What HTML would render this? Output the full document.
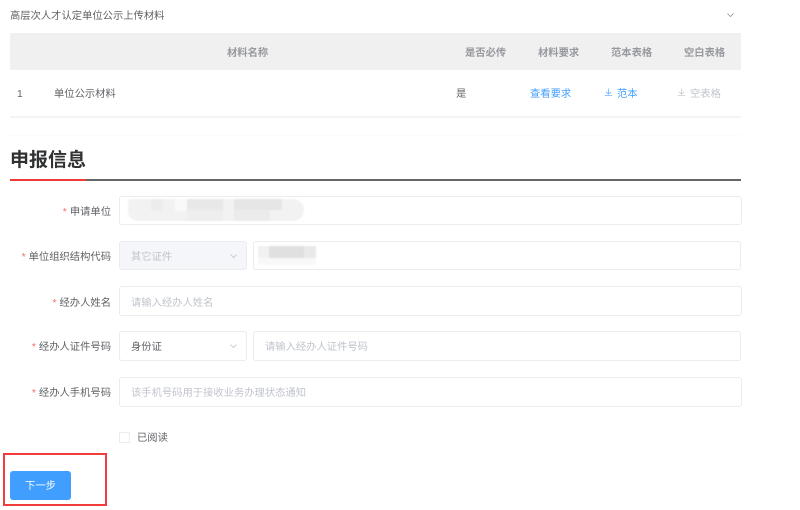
<!DOCTYPE html>
<html lang="zh"><head><meta charset="utf-8"><style>
html,body{margin:0;padding:0;background:#fff}
body{width:800px;height:510px;position:relative;overflow:hidden;font-family:"Liberation Sans","Noto Sans CJK SC",sans-serif;font-size:10.3px;color:#606266}
.t{position:absolute;white-space:nowrap;line-height:14px;height:14px;filter:blur(.25px)}
.b{position:absolute;box-sizing:border-box;border:1px solid #ebebf1;border-radius:3px;background:#fff}
.h{font-weight:700;color:#97999e}
.l{text-align:right;right:689px}
.l i{color:#f56c6c;font-style:normal;margin-right:3px}
.p{color:#c0c4cc}
svg{position:absolute;overflow:visible}
.m{position:absolute}
.q{filter:blur(.7px)}
</style></head><body>
<div class="t" style="left:10px;top:10px;color:#606266">高层次人才认定单位公示上传材料</div>
<svg style="left:727px;top:13px" width="7" height="5"><path d="M.5 .5L3.5 3.5L6.5 .5" fill="none" stroke="#8f9399" stroke-width=".8"/></svg>

<div class="m" style="left:10px;top:33px;width:731px;height:37px;background:#f0f0f1"></div>
<div class="t h" style="left:227px;top:47px">材料名称</div>
<div class="t h" style="left:465px;top:47px">是否必传</div>
<div class="t h" style="left:538px;top:47px">材料要求</div>
<div class="t h" style="left:611px;top:47px">范本表格</div>
<div class="t h" style="left:684px;top:47px">空白表格</div>
<div class="t" style="left:17px;top:88px">1</div>
<div class="t" style="left:54px;top:88px">单位公示材料</div>
<div class="t" style="left:456px;top:88px">是</div>
<div class="t" style="left:530px;top:88px;color:#409eff">查看要求</div>
<svg style="left:604px;top:88px" width="9" height="9"><path d="M4.5 .5V6M2 3.8L4.5 6.2L7 3.8M.8 7.6H8.2" fill="none" stroke="#6fb4fb" stroke-width=".8"/></svg>
<div class="t" style="left:617px;top:88px;color:#409eff">范本</div>
<svg style="left:677px;top:88px" width="9" height="9"><path d="M4.5 .5V6M2 3.8L4.5 6.2L7 3.8M.8 7.6H8.2" fill="none" stroke="#c8cbd2" stroke-width=".8"/></svg>
<div class="t" style="left:690px;top:88px;color:#c0c4cc">空表格</div>
<div class="m" style="left:10px;top:116px;width:731px;height:2px;background:#f3f3f8"></div>
<div class="m" style="left:10px;top:135px;width:731px;height:1px;background:#fbfbfb"></div>

<div class="t" style="left:10px;top:150px;height:22px;line-height:22px;font-size:19px;font-weight:700;color:#303133;filter:none">申报信息</div>
<div class="m" style="left:10px;top:179px;width:731px;height:2px;background:#666"></div>
<div class="m" style="left:10px;top:179px;width:76px;height:2px;background:#f03a3a"></div>

<div class="t l" style="top:206px"><i>*</i>申请单位</div>
<div class="b" style="left:119px;top:196px;width:623px;height:29px"></div>
<div class="q" style="position:absolute;left:0;top:0">
<div class="m" style="left:128px;top:199px;width:176px;height:22px;background:#f2f2f2;border-radius:3px 11px 11px 10px"></div>
<div class="m" style="left:151px;top:199px;width:12px;height:12px;background:#ececec"></div>
<div class="m" style="left:175px;top:199px;width:12px;height:12px;background:#f9f9f9"></div>
<div class="m" style="left:187px;top:199px;width:36px;height:11px;background:#e8e8e8"></div>
<div class="m" style="left:187px;top:210px;width:36px;height:11px;background:#eeeeee"></div>
<div class="m" style="left:234px;top:199px;width:48px;height:11px;background:#e6e6e6"></div>
<div class="m" style="left:234px;top:210px;width:36px;height:11px;background:#ebebeb"></div>
</div>

<div class="t l" style="top:251px"><i>*</i>单位组织结构代码</div>
<div class="b" style="left:119px;top:241px;width:128px;height:29px;background:#f5f6fa"></div>
<div class="t" style="left:131px;top:251px;color:#c0c4cc">其它证件</div>
<svg style="left:230px;top:254px" width="7" height="5"><path d="M.5 .5L3.5 3.5L6.5 .5" fill="none" stroke="#c0c4cc" stroke-width=".8"/></svg>
<div class="b" style="left:253px;top:241px;width:488px;height:29px"></div>
<div class="q" style="position:absolute;left:0;top:0">
<div class="m" style="left:258px;top:246px;width:58px;height:19px;background:linear-gradient(#f1f1f1 60%,#f8f8f8 60%)"></div>
<div class="m" style="left:269px;top:246px;width:35px;height:12px;background:#e0e0e0"></div>
<div class="m" style="left:304px;top:246px;width:12px;height:12px;background:#e9e9e9"></div>
</div>

<div class="t l" style="top:297px"><i>*</i>经办人姓名</div>
<div class="b" style="left:119px;top:286px;width:623px;height:30px"></div>
<div class="t p" style="left:131px;top:297px">请输入经办人姓名</div>

<div class="t l" style="top:341px"><i>*</i>经办人证件号码</div>
<div class="b" style="left:119px;top:331px;width:128px;height:30px"></div>
<div class="t" style="left:131px;top:341px">身份证</div>
<svg style="left:230px;top:344px" width="7" height="5"><path d="M.5 .5L3.5 3.5L6.5 .5" fill="none" stroke="#c0c4cc" stroke-width=".8"/></svg>
<div class="b" style="left:253px;top:331px;width:488px;height:30px"></div>
<div class="t p" style="left:265px;top:341px">请输入经办人证件号码</div>

<div class="t l" style="top:387px"><i>*</i>经办人手机号码</div>
<div class="b" style="left:119px;top:377px;width:623px;height:30px"></div>
<div class="t p" style="left:131px;top:387px">该手机号码用于接收业务办理状态通知</div>

<div class="b" style="left:119px;top:432px;width:11px;height:11px;border-radius:1px"></div>
<div class="t" style="left:137px;top:432px">已阅读</div>

<div class="m" style="left:3px;top:453px;width:104px;height:53px;box-sizing:border-box;border:2px solid #f23c3c"></div>
<div class="m" style="left:10px;top:471px;width:61px;height:29px;background:#409eff;border-radius:3px"></div>
<div class="t" style="left:10px;top:480px;width:61px;text-align:center;color:#fff">下一步</div>
</body></html>
